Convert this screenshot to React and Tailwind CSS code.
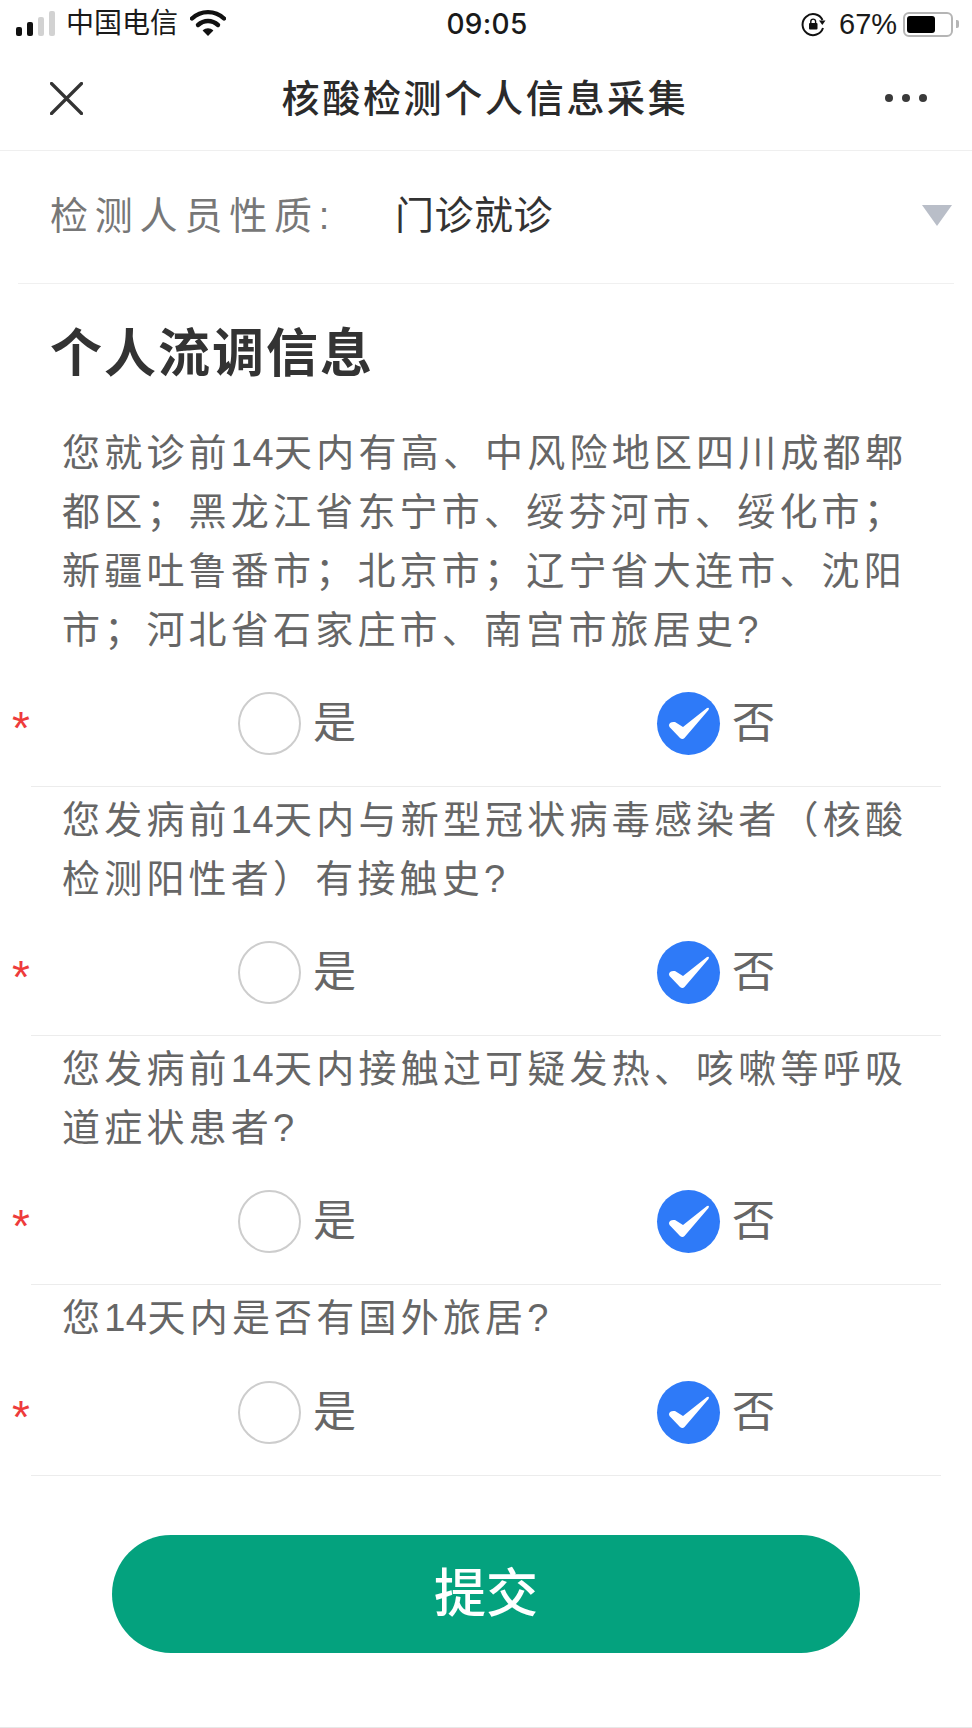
import React from 'react';

const QUESTIONS = [
    { before: '您就诊前', after: '天内有高、中风险地区四川成都郫都区；黑龙江省东宁市、绥芬河市、绥化市；新疆吐鲁番市；北京市；辽宁省大连市、沈阳市；河北省石家庄市、南宫市旅居史?' },
    { before: '您发病前', after: '天内与新型冠状病毒感染者（核酸检测阳性者）有接触史?' },
    { before: '您发病前', after: '天内接触过可疑发热、咳嗽等呼吸道症状患者?' },
    { before: '您', after: '天内是否有国外旅居?' },
];

const StatusBar = () => (
    <div className="flex items-center h-[48px] text-[#1a1a1a]">
        <div className="flex items-end gap-[5px] ml-[16px] h-[25px] mb-[2px]">
            <span className="w-[6px] h-[9px] rounded-[2px] bg-[#111]" />
            <span className="w-[6px] h-[14px] rounded-[2px] bg-[#111]" />
            <span className="w-[6px] h-[19px] rounded-[2px] bg-[#d2d2d2]" />
            <span className="w-[6px] h-[25px] rounded-[2px] bg-[#d2d2d2]" />
        </div>
        <span className="ml-[11px] w-[124px] text-[28px] leading-none">中国电信</span>
        <svg width="36" height="27" viewBox="0 0 36 27" className="mb-[4px]" fill="none">
            <path d="M2 9.5C11 1 25 1 34 9.5" stroke="#111" strokeWidth="4.4" strokeLinecap="round" />
            <path d="M8 16C14 10.6 22 10.6 28 16" stroke="#111" strokeWidth="4.4" strokeLinecap="round" />
            <path d="M12.6 21.4C16 18.6 20 18.6 23.4 21.4L18 27Z" fill="#111" />
        </svg>
        <span className="ml-[220px] w-[82px] text-center text-[28px] leading-none font-medium tracking-[0.3px] font-['Inter',sans-serif]">09:05</span>
        <svg width="25" height="25" viewBox="0 0 25 25" className="ml-[273px]" fill="none">
            <path d="M21.5 8A10.5 10.5 0 1 0 22 16" stroke="#111" strokeWidth="2" />
            <path d="M18 8.5L24.5 8.5L21.3 13Z" fill="#111" />
            <rect x="8" y="11" width="8.5" height="6.5" rx="1" fill="#111" />
            <path d="M9.8 11V9.5a2.4 2.4 0 0 1 4.8 0V11" stroke="#111" strokeWidth="1.4" />
        </svg>
        <span className="ml-[13px] text-[29px] leading-none">67%</span>
        <div className="ml-[6px] flex items-center">
            <div className="w-[50px] h-[25px] rounded-[6px] border-2 border-[#b5b5b5] p-[2px]">
                <div className="w-[28px] h-full rounded-[3px] bg-black" />
            </div>
            <span className="ml-[3px] w-[3px] h-[8px] rounded-r-[2px] bg-[#b5b5b5]" />
        </div>
    </div>
);

const NavBar = () => (
    <div className="flex items-center justify-between h-[103px] border-b border-[#efefef] pl-[50px] pr-[45px]">
        <svg width="33" height="33" viewBox="0 0 33 33" fill="none" className="-mt-[2px]">
            <path d="M1.5 1.5L31.5 31.5M31.5 1.5L1.5 31.5" stroke="#333" strokeWidth="3.2" strokeLinecap="round" />
        </svg>
        <h1 className="ml-[2px] text-[38px] leading-none font-medium tracking-[2.7px] text-[#2b2b2b] -mt-[1px]">核酸检测个人信息采集</h1>
        <div className="flex gap-[9px] -mt-[2px]">
            <span className="w-[8px] h-[8px] rounded-full bg-[#3a3a3a]" />
            <span className="w-[8px] h-[8px] rounded-full bg-[#3a3a3a]" />
            <span className="w-[8px] h-[8px] rounded-full bg-[#3a3a3a]" />
        </div>
    </div>
);

const Radio = ({ label, checked, className }) => (
    <label className={`flex items-center gap-[12px] ${className}`}>
        {checked ? (
            <span className="w-[63px] h-[63px] rounded-full bg-[#2e7af8]">
                <svg width="63" height="63" viewBox="0 0 63 63">
                    <path d="M13 31Q11 33 12.5 35L23 46Q25.5 48 27.5 46L51.5 18Q53 15 50 16L26 35L18 30Q15 29.5 13 31Z" fill="#fff" />
                </svg>
            </span>
        ) : (
            <span className="w-[63px] h-[63px] rounded-full border-2 border-[#cdcdcd]" />
        )}
        <span className="text-[43px] leading-none text-[#666]">{label}</span>
    </label>
);

const Question = ({ before, after }) => (
    <div className="mx-[31px] pt-[4px] border-b border-[#ececec]">
        <p className="pl-[31px] pr-[20px] min-h-[60px] text-[38px] leading-[59px] tracking-[4.2px] text-[#666]">
            {before}<span className="tracking-[0.5px]">14</span>{after}
        </p>
        <div className="flex items-center h-[126px] -ml-[31px]">
            <span className="w-[238px] pl-[12px] pt-[10px] text-[46px] leading-none text-[#ee3b3b]">*</span>
            <Radio label="是" className="w-[419px]" />
            <Radio label="否" checked />
        </div>
    </div>
);

export default function App() {
    return (
        <div className="w-[972px] h-[1728px] overflow-hidden bg-white border-b border-[#e8e8e8] font-['Liberation_Sans','Noto_Sans_CJK_SC',sans-serif]">
            <StatusBar />
            <NavBar />

            <div className="mx-[18px] flex items-center h-[133px] pb-[3px] border-b border-[#f0f0f0]">
                <span className="ml-[32px] w-[345px] text-[38px] leading-none tracking-[6.8px] text-[#777]">检测人员性质:</span>
                <span className="text-[39px] leading-none tracking-[0.5px] text-[#333]">门诊就诊</span>
                <svg width="30" height="21" viewBox="0 0 30 21" className="ml-auto mr-[2px] mb-[1px]">
                    <path d="M0 0H30L15 21Z" fill="#b9bec8" />
                </svg>
            </div>

            <h2 className="ml-[50px] mt-[44px] mb-[40px] text-[52px] leading-[52px] font-bold tracking-[2px] text-[#333]">个人流调信息</h2>

            {QUESTIONS.map((q, i) => (
                <Question key={i} before={q.before} after={q.after} />
            ))}

            <div className="flex justify-center mt-[59px]">
                <button className="w-[748px] h-[118px] rounded-full bg-[#04a27e] text-white text-[52px] leading-none font-medium">提交</button>
            </div>
        </div>
    );
}
